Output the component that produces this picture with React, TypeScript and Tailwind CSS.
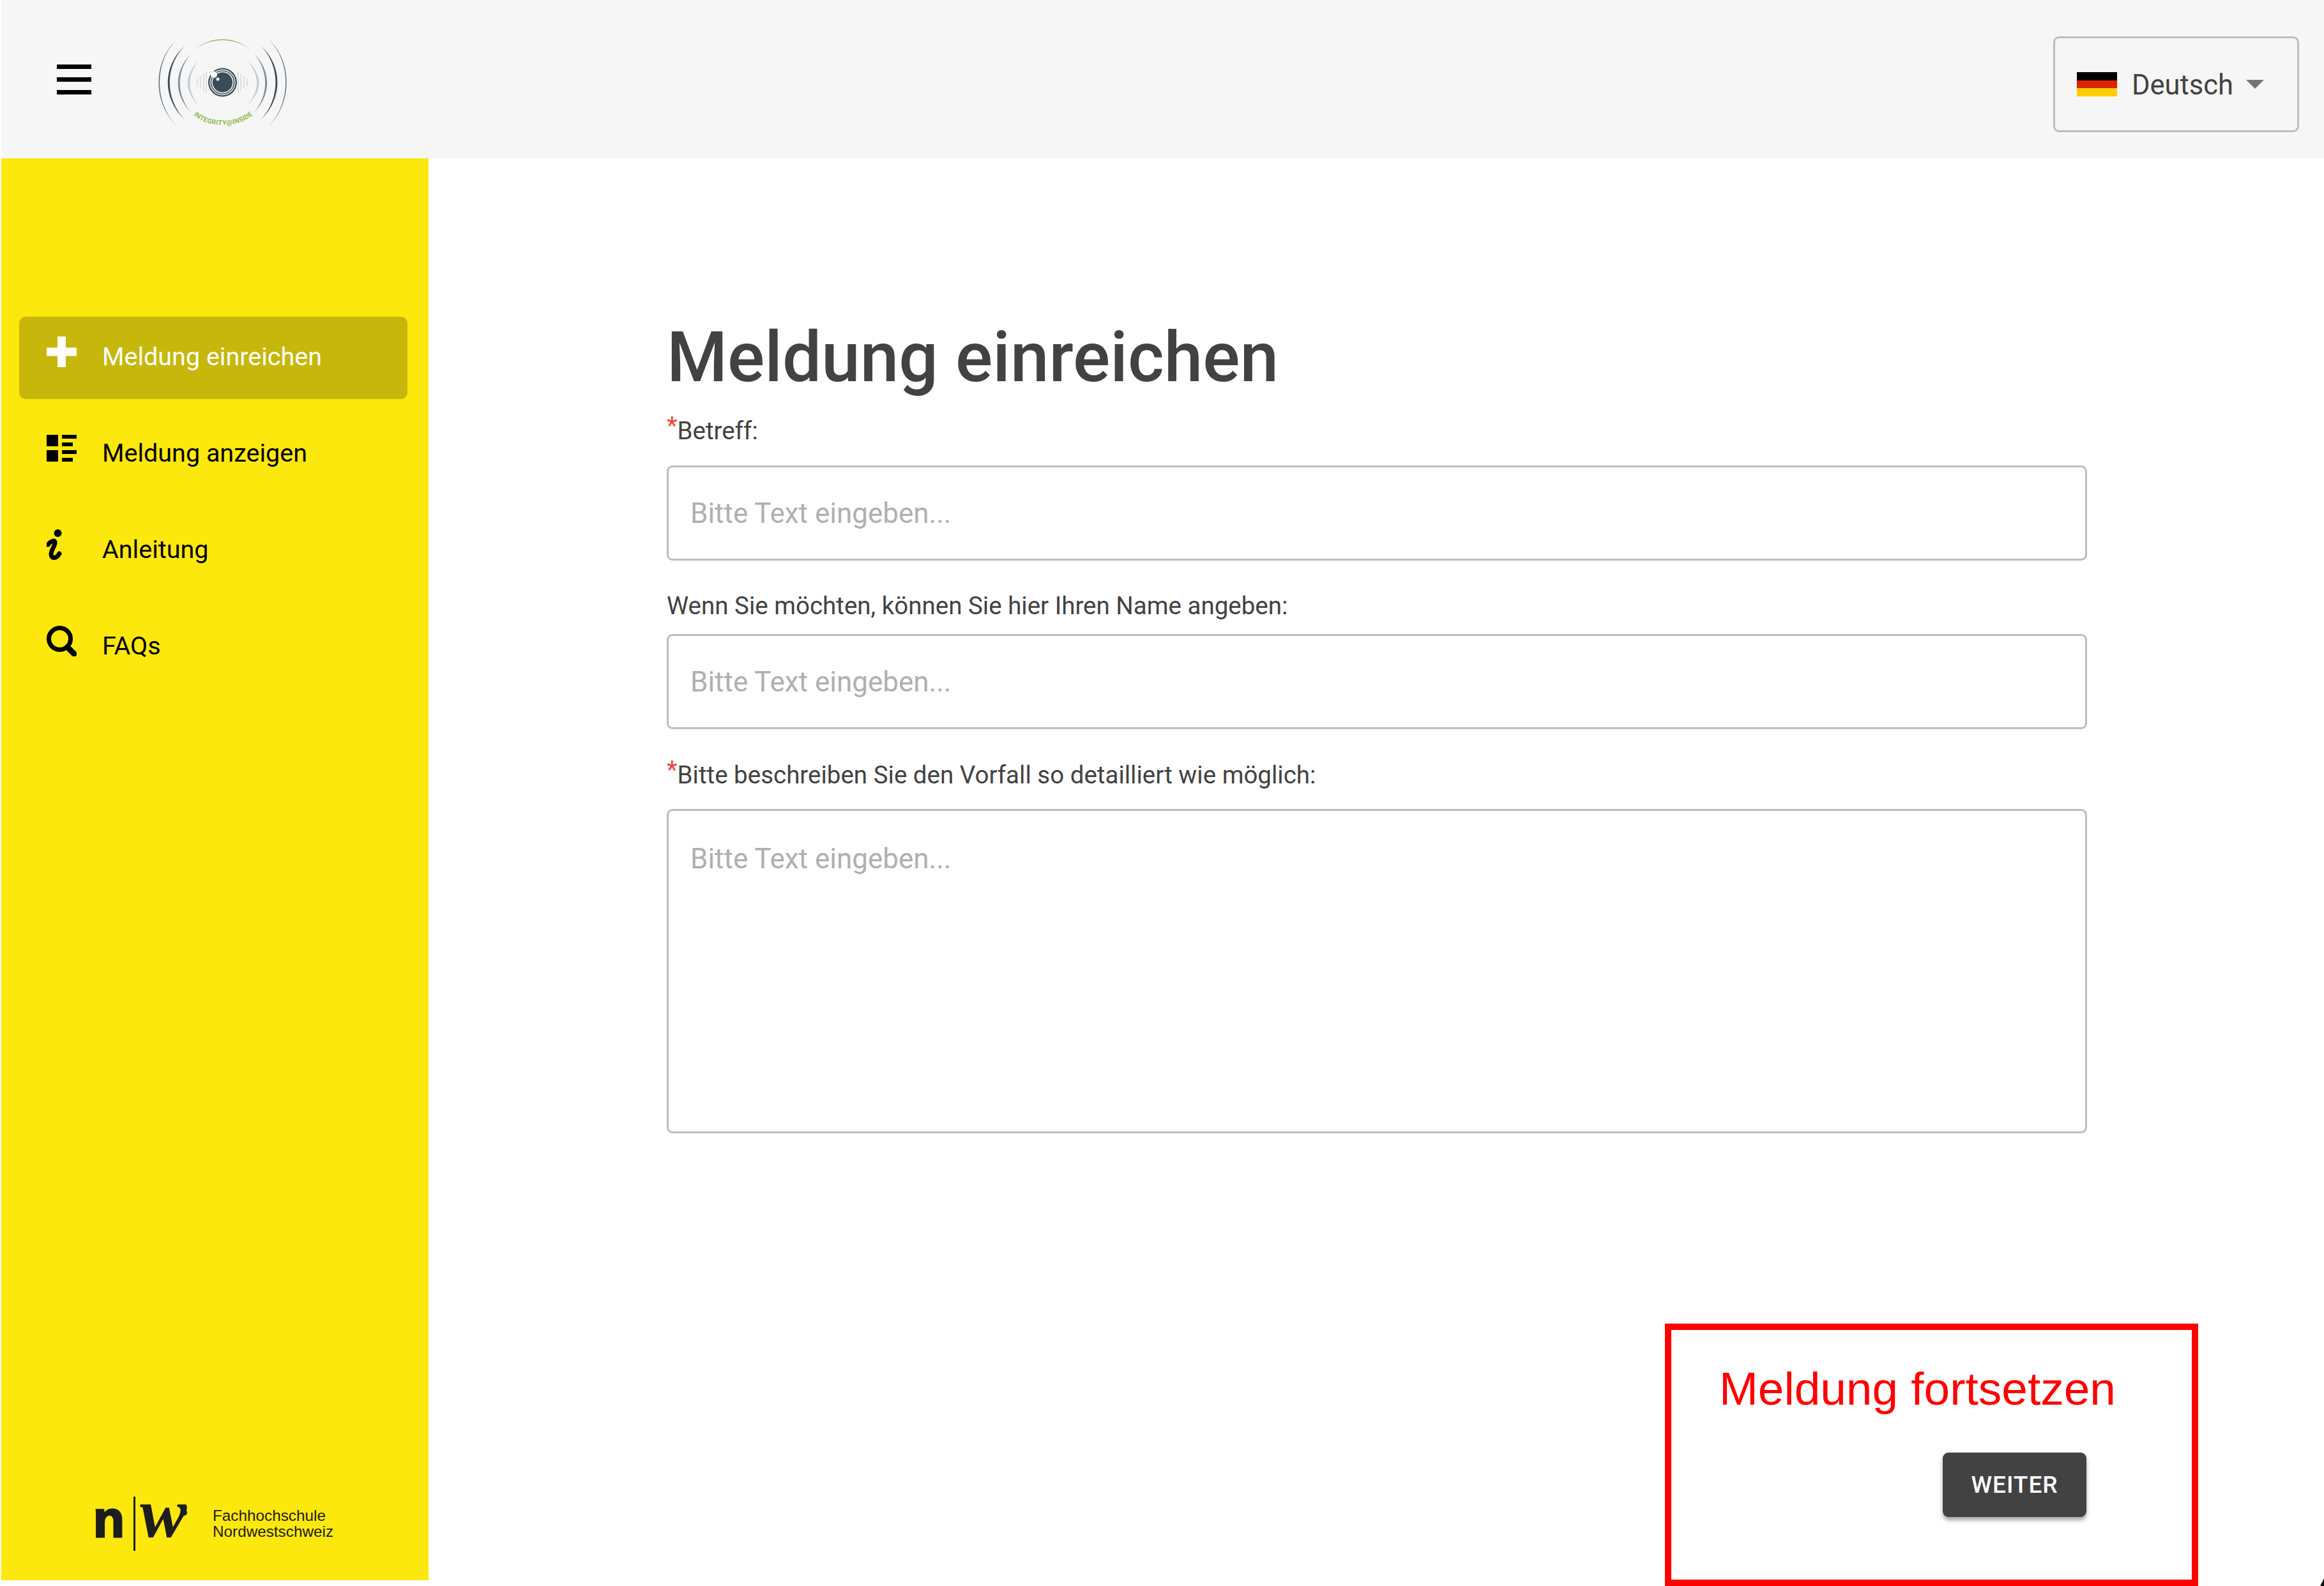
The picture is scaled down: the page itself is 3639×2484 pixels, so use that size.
const labelClass = 'text-[38.5px] leading-[44px] text-[#424242]';
const inputClass =
  "w-full rounded-[9px] border-[3px] border-[#bdbdbd] bg-white px-[34px] text-[44px] text-[#424242] placeholder:text-[#b0b0b0] focus:outline-none";

function Logo() {
  return (
    <svg width="240" height="180" viewBox="0 0 240 180" fill="none">
      {/* sound arcs, drawn as thin crescents so the ends fade out */}
      <path d="M47 28 C9 62 9 128 47 163 C11 128 11 62 47 28Z" fill="#5e6f79" />
      <path d="M191 28 C228 62 228 128 191 163 C226 128 226 62 191 28Z" fill="#5e6f79" />
      <path d="M59 38 C24 70 24 120 59 153 C28 120 28 70 59 38Z" fill="#3a4c57" />
      <path d="M179 38 C213 70 213 120 179 153 C209 120 209 70 179 38Z" fill="#3a4c57" />
      <path d="M69 50 C42 78 42 114 69 142 C46 114 46 78 69 50Z" fill="#7f8e97" />
      <path d="M168 50 C195 78 195 114 168 142 C191 114 191 78 168 50Z" fill="#7f8e97" />
      <path d="M81 61 C58 84 58 108 81 131 C63 108 63 84 81 61Z" fill="#c5cfd6" />
      <path d="M157 61 C182 84 182 108 157 131 C177 108 177 84 157 61Z" fill="#c5cfd6" />
      <path d="M74 44 C100 22 137 22 163 44 C137 24 100 24 74 44Z" fill="#8fb84a" />
      <g stroke="#c8d2d8" strokeWidth="1.2">
        <path d="M79 89v12M84 85v20M89 81v28M93 78v34M143 78v34M147 81v28M152 85v20M157 89v12" />
      </g>
      <circle cx="118.500" cy="95" r="22.500" fill="#3a4c57" />
      <circle cx="118.500" cy="95" r="19.500" stroke="#f6f6f6" strokeWidth="1.3" />
      <circle cx="118.500" cy="95" r="16.500" stroke="#f6f6f6" strokeWidth="1.6" />
      <circle cx="105" cy="83" r="5" fill="#ffffff" />
      <circle cx="111" cy="90" r="2.500" fill="#ffffff" />
      <defs>
        <path id="logo-curve" d="M73 146 C95 167 142 167 166 146" />
      </defs>
      <text fill="#8fb84a" fontSize="10.500" fontWeight="700" fontFamily="Roboto, sans-serif">
        <textPath href="#logo-curve" textLength="100" lengthAdjust="spacing">
          INTEGRITY@INSIDE
        </textPath>
      </text>
    </svg>
  );
}

function PlusIcon() {
  return (
    <svg width="47" height="48" viewBox="0 0 47 48" fill="#ffffff">
      <path d="M17 0h13v17.500h17v13H30V48H17V30.500H0v-13h17z" />
    </svg>
  );
}

function ListIcon() {
  return (
    <svg width="47" height="48" viewBox="0 -3 47 48" fill="#000000">
      <path d="M0 0h18v18H0zM0 24h18v18H0zM24 0h23v6H24zM24 12h17v6H24zM24 24h23v6H24zM24 36h17v6H24z" />
    </svg>
  );
}

function InfoIcon() {
  return (
    <svg width="47" height="48" viewBox="0 0 47 48" fill="none">
      <circle cx="17.500" cy="6" r="6" fill="#000000" />
      <path
        d="M2 24 C6 19 12 16 13 20 C14 25 7 32 7 39 C7 46 15 47 20 38"
        stroke="#000000"
        strokeWidth="7"
        strokeLinecap="round"
      />
    </svg>
  );
}

function SearchIcon() {
  return (
    <svg width="47" height="48" viewBox="0 0 47 48" fill="none" stroke="#000000">
      <circle cx="20.500" cy="20.500" r="17" strokeWidth="7" />
      <path d="M33 34l10 10" strokeWidth="9" strokeLinecap="round" />
    </svg>
  );
}

function FhnwMark() {
  return (
    <svg width="150" height="165" viewBox="0 -35 150 165" fill="#1d1d1b">
      <text
        x="0"
        y="67"
        fontSize="80"
        fontWeight="700"
        fontFamily="Liberation Sans, sans-serif"
        stroke="#1d1d1b"
        strokeWidth="3"
      >
        n
      </text>
      <path d="M63 4h3v85h-3z" />
      <text
        x="73"
        y="67"
        fontSize="110"
        fontWeight="700"
        fontStyle="italic"
        fontFamily="Liberation Serif, serif"
      >
        w
      </text>
      <circle cx="142" cy="29" r="5" />
    </svg>
  );
}

const navItems = [
  { label: 'Meldung einreichen', icon: <PlusIcon />, active: true },
  { label: 'Meldung anzeigen', icon: <ListIcon />, active: false },
  { label: 'Anleitung', icon: <InfoIcon />, active: false },
  { label: 'FAQs', icon: <SearchIcon />, active: false },
];

function Field({
  label,
  required,
  className,
}: {
  label: string;
  required?: boolean;
  className: string;
}) {
  return (
    <div className={className}>
      <label className={`block ${labelClass}`}>
        {required && <span className="relative top-[-8px] text-[#f44336]">*</span>}
        {label}
      </label>
    </div>
  );
}

export default function App() {
  return (
    <div className="relative flex h-[2484px] w-[3639px] flex-col overflow-hidden bg-white font-['Roboto',sans-serif]">
      <header className="ml-[2px] flex h-[248px] shrink-0 items-center justify-between bg-[#f6f6f6] pr-[39px]">
        <div className="flex items-center">
          <button className="ml-[52px] flex h-[80px] w-[122px] flex-col items-center justify-center gap-[13px] rounded-[10px] bg-[#f7f7f7] pl-[2px]">
            <span className="h-[7px] w-[54px] bg-black" />
            <span className="h-[7px] w-[54px] bg-black" />
            <span className="h-[7px] w-[54px] bg-black" />
          </button>
          <div className="ml-[54px]">
            <Logo />
          </div>
        </div>
        <button className="mt-[16px] flex h-[150px] w-[385px] items-center rounded-[9px] border-[3px] border-[#bdbdbd] pl-[34px]">
          <span className="flex h-[38px] w-[63px] flex-col">
            <span className="flex-1 bg-black" />
            <span className="flex-1 bg-[#dd2200]" />
            <span className="flex-1 bg-[#ffce00]" />
          </span>
          <span className="ml-[23px] mt-[4px] text-[43.5px] text-[#424242]">Deutsch</span>
          <span className="ml-[20px] h-0 w-0 border-x-[14px] border-t-[14px] border-x-transparent border-t-[#757575]" />
        </button>
      </header>

      <div className="flex h-[2227px] shrink-0">
        <aside className="ml-[2px] flex w-[669px] shrink-0 flex-col justify-between bg-[#fce80c] pt-[248px]">
          <nav className="flex flex-col gap-[22px] pl-[28px] pr-[33px]">
            {navItems.map((item) => (
              <div
                key={item.label}
                className={`flex h-[129px] items-center rounded-[10px] pl-[43px] ${
                  item.active ? 'bg-[#c7b70c] text-white' : 'text-black'
                }`}
              >
                <span className="flex w-[87px] shrink-0 -translate-y-[10px]">{item.icon}</span>
                <span className="mb-[4px] text-[39.5px]">{item.label}</span>
              </div>
            ))}
          </nav>
          <div className="mb-[5px] ml-[144px] flex items-center">
            <FhnwMark />
            <div className="mb-[4px] ml-[37px] font-['Liberation_Sans',sans-serif] text-[24.3px] leading-[25px] text-[#1d1d1b]">
              <div>Fachhochschule</div>
              <div>Nordwestschweiz</div>
            </div>
          </div>
        </aside>

        <main className="flex-1 pl-[373px] pr-[371px] pt-[247px]">
          <h1 className="text-[108.75px] font-medium leading-[130px] text-[#424242]">Meldung einreichen</h1>
          <Field label="Betreff:" required className="mt-[28px]" />
          <input className={`mt-[32px] h-[149px] ${inputClass}`} placeholder="Bitte Text eingeben..." />
          <Field label="Wenn Sie möchten, können Sie hier Ihren Name angeben:" className="mt-[49px]" />
          <input className={`mt-[22px] h-[149px] ${inputClass}`} placeholder="Bitte Text eingeben..." />
          <Field
            label="Bitte beschreiben Sie den Vorfall so detailliert wie möglich:"
            required
            className="mt-[50px]"
          />
          <textarea
            className={`mt-[31px] block h-[508px] resize-none py-[42px] ${inputClass}`}
            placeholder="Bitte Text eingeben..."
          />
        </main>
      </div>

      <div className="absolute bottom-0 left-[2607px] h-[411px] w-[835px] border-[10px] border-[#ff0000] bg-white pl-[75px] pt-[47px]">
        <p className="font-['Liberation_Sans',sans-serif] text-[73px] leading-[90px] text-[#ff0000]">
          Meldung fortsetzen
        </p>
        <button className="ml-[350px] mt-[55px] h-[101px] w-[225px] rounded-[9px] bg-[#424242] text-[37px] font-medium tracking-[1px] text-white shadow-[0_5px_6px_rgba(0,0,0,0.35)]">
          WEITER
        </button>
      </div>

      {/* stray corner of the next screenshot, bottom right */}
      <svg className="absolute bottom-0 right-0" width="6" height="12" viewBox="0 0 6 12" fill="#111111">
        <path d="M6 0v12H0z" />
      </svg>
    </div>
  );
}
